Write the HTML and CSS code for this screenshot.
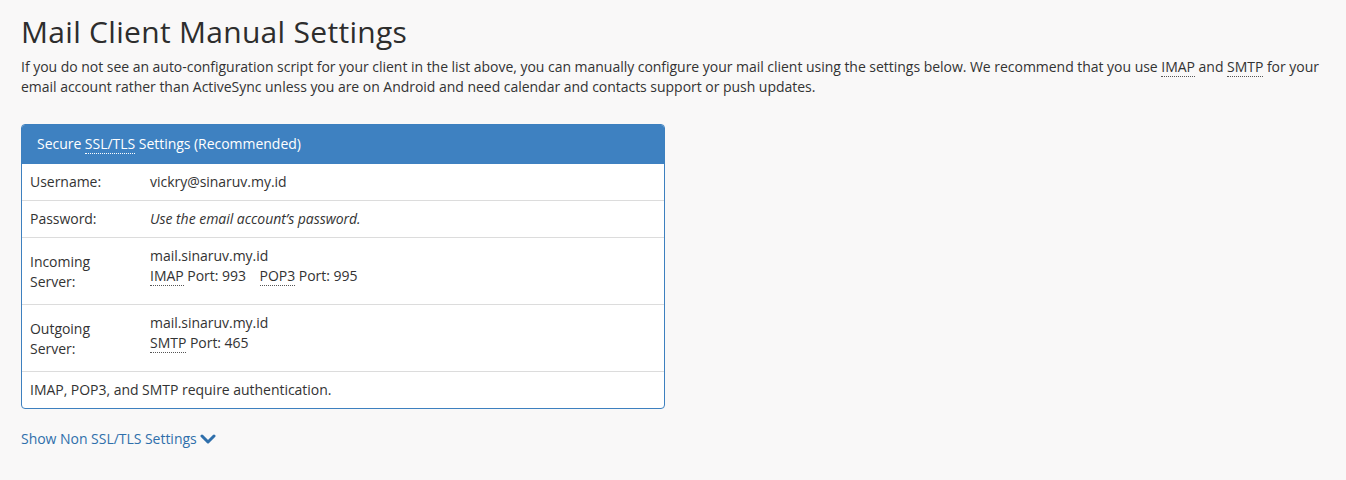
FILE: index.html
```html
<!DOCTYPE html>
<html>
<head>
<meta charset="utf-8">
<link rel="stylesheet" href="styles.css">
</head>
<body>
<div class="page">
  <h1 class="title">Mail Client Manual Settings</h1>
  <p class="intro">If you do not see an auto-configuration script for your client in the list above, you can manually configure your mail client using the settings below. We recommend that you use <abbr>IMAP</abbr> and <abbr>SMTP</abbr> for your email account rather than ActiveSync unless you are on Android and need calendar and contacts support or push updates.</p>

  <div class="panel">
    <div class="panel-head">Secure <abbr>SSL/TLS</abbr> Settings (Recommended)</div>
    <div class="row">
      <div class="label">Username:</div>
      <div class="value">vickry@sinaruv.my.id</div>
    </div>
    <div class="row">
      <div class="label">Password:</div>
      <div class="value"><em>Use the email account’s password.</em></div>
    </div>
    <div class="row tall">
      <div class="label">Incoming Server:</div>
      <div class="value">mail.sinaruv.my.id<br><abbr>IMAP</abbr> Port: 993 <span class="gap"></span><abbr>POP3</abbr> Port: 995</div>
    </div>
    <div class="row tall">
      <div class="label">Outgoing Server:</div>
      <div class="value">mail.sinaruv.my.id<br><abbr>SMTP</abbr> Port: 465</div>
    </div>
    <div class="row single">IMAP, POP3, and SMTP require authentication.</div>
  </div>

  <a class="toggle" href="#">Show Non SSL/TLS Settings <svg class="chev" width="16" height="12" viewBox="0 0 16 12"><path d="M2 3 L8 9 L14 3" fill="none" stroke="#2f6fab" stroke-width="3" stroke-linecap="round" stroke-linejoin="round"/></svg></a>
</div>
</body>
</html>
```

FILE: styles.css
```css
html, body {
  margin: 0;
  padding: 0;
  background: #f9f8f8;
}
body {
  font-family: "Open Sans", "DejaVu Sans", sans-serif;
  color: #333;
  font-size: 14px;
  line-height: 20px;
  letter-spacing: -0.03px;
}
.page {
  padding: 10px 20px 20px 21px;
}
.title {
  font-size: 30px;
  font-weight: 400;
  line-height: 36px;
  letter-spacing: 0.3px;
  margin: 4px 0 7px 0;
  color: #2d2d2d;
}
.intro {
  margin: 0 0 27px 0;
}
abbr {
  text-decoration: none;
  border-bottom: 1px dotted #555;
}
.panel {
  width: 642px;
  border: 1px solid #3d80bf;
  border-radius: 4px;
  background: #fff;
  overflow: hidden;
  margin-bottom: 20px;
}
.panel-head {
  background: #3e81c1;
  color: #fff;
  padding: 9px 15px 10px 15px;
  line-height: 20px;
}
.panel-head abbr {
  border-bottom-color: #fff;
}
.row {
  display: flex;
  border-top: 1px solid #dcdcdc;
  padding: 8px 8px;
}
.row:nth-child(2) {
  border-top: none;
}
.label {
  width: 120px;
  flex: 0 0 120px;
  box-sizing: border-box;
  padding-right: 50px;
}
.value {
  flex: 1;
}
.row.tall {
  padding-bottom: 12px;
}
.row.tall .label {
  padding-top: 6px;
}
.value .gap {
  display: inline-block;
  width: 10px;
}
.single {
  display: block;
}
.toggle {
  color: #2f6fab;
  text-decoration: none;
  display: inline-flex;
  align-items: center;
  gap: 3px;
}
.chev {
  display: block;
}
```
